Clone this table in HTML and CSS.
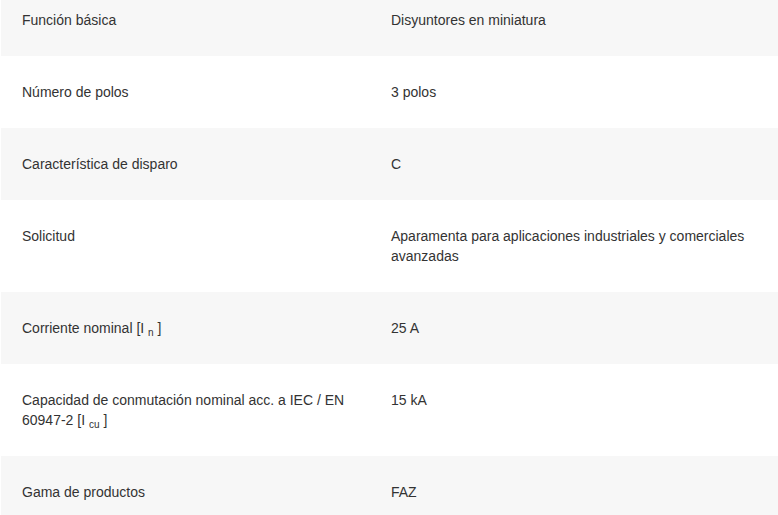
FILE: index.html
```html
<!DOCTYPE html>
<html lang="es">
<head>
<meta charset="utf-8">
<title>Especificaciones</title>
<link rel="stylesheet" href="styles.css">
</head>
<body>
<div class="wrap">
<table class="specs">
  <tbody>
    <tr class="odd"><td class="label">Función básica</td><td class="value">Disyuntores en miniatura</td></tr>
    <tr><td class="label">Número de polos</td><td class="value">3 polos</td></tr>
    <tr class="odd"><td class="label">Característica de disparo</td><td class="value">C</td></tr>
    <tr><td class="label">Solicitud</td><td class="value">Aparamenta para aplicaciones industriales y comerciales avanzadas</td></tr>
    <tr class="odd"><td class="label">Corriente nominal [I <sub>n</sub> ]</td><td class="value">25 A</td></tr>
    <tr><td class="label">Capacidad de conmutación nominal acc. a IEC / EN 60947-2 [I <sub>cu</sub> ]</td><td class="value">15 kA</td></tr>
    <tr class="odd"><td class="label">Gama de productos</td><td class="value">FAZ</td></tr>
  </tbody>
</table>
</div>
</body>
</html>
```
FILE: styles.css
```css
html, body {
  margin: 0;
  padding: 0;
  background: #ffffff;
}
body {
  font-family: "Liberation Sans", Arial, sans-serif;
  font-size: 14px;
  color: #333333;
  overflow: hidden;
}
.wrap {
  padding-left: 1px;
  margin-top: -16px;
}
.specs {
  width: 100%;
  border-collapse: collapse;
  table-layout: fixed;
}
.specs td {
  vertical-align: top;
  padding: 26px 22px 26px 21px;
  line-height: 20px;
}
.specs td.label {
  width: 325px;
}
.specs td.value {
  padding-left: 22px;
}
.specs tr.odd td {
  background: #f7f7f7;
}
.specs sub {
  font-size: 10px;
  line-height: 0;
  vertical-align: -3px;
}
```
